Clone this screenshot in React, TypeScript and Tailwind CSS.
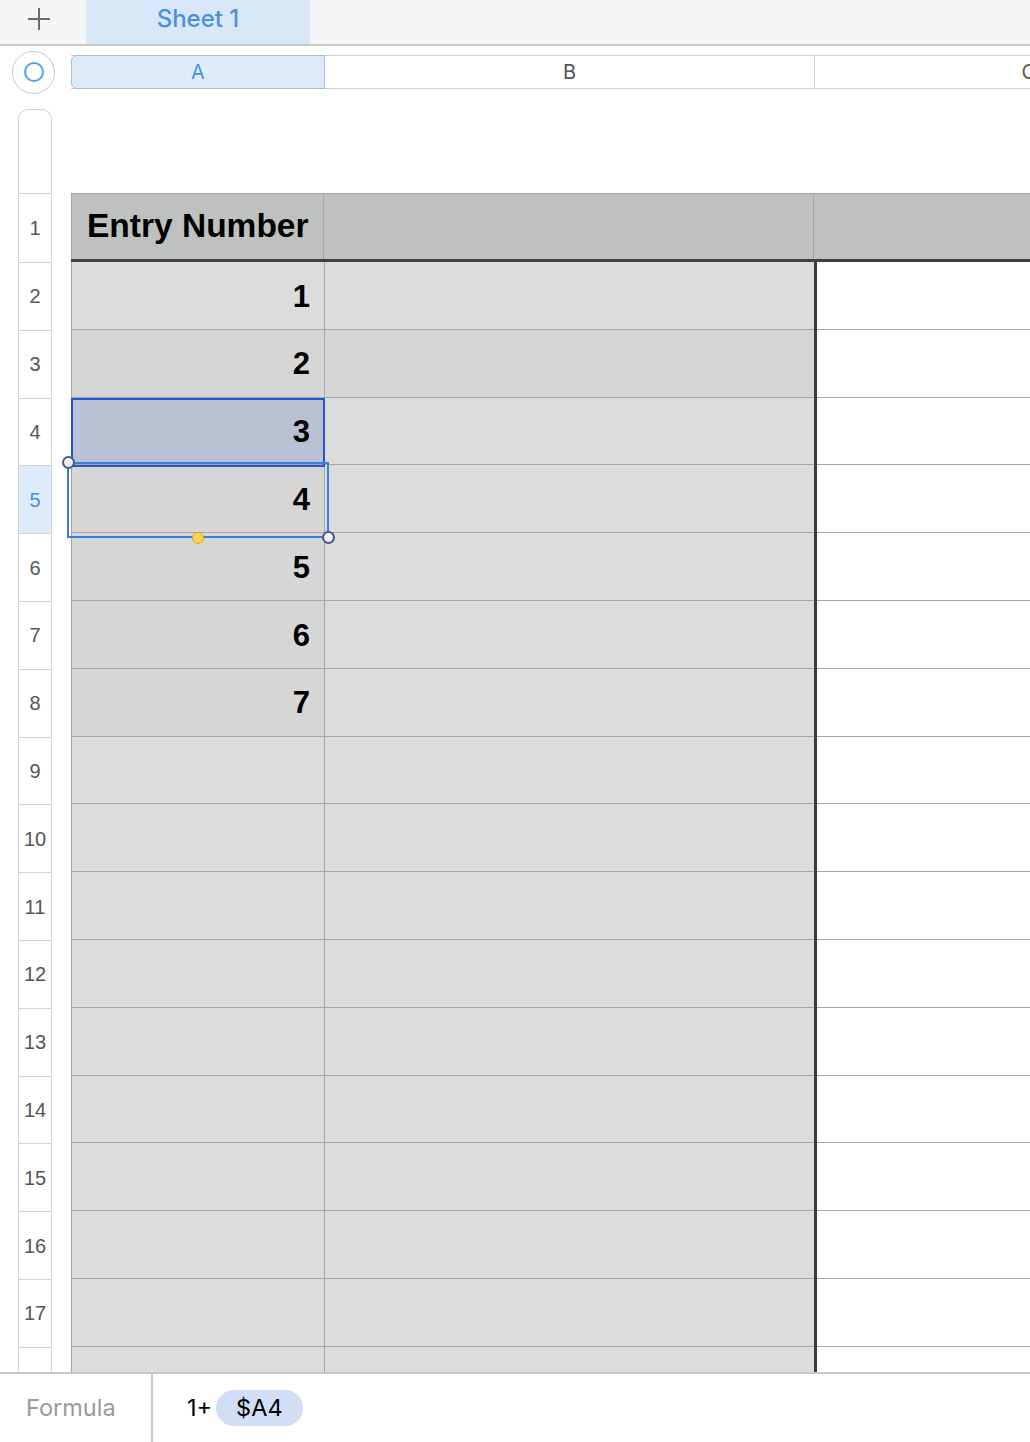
import React from "react";

const ROWS = Array.from({ length: 18 }, (_, i) => i + 1);

const aFill = (n: number) => {
  if (n === 4) return "bg-[#b9c1d4]";
  if (n >= 3 && n <= 8) return "bg-[#d6d6d6]";
  return "bg-[#dcdcdc]";
};

const bFill = (n: number) => (n === 3 ? "bg-[#d6d6d6]" : "bg-[#dcdcdc]");

const Handle = ({ top, left }: { top: number; left: number }) => (
  <div
    className="absolute w-[13px] h-[13px] rounded-full border-2 border-[#45598c] bg-gradient-to-b from-white to-[#e4e4e4]"
    style={{ top: top - 6.5, left: left - 6.5 }}
  />
);

export default function App() {
  return (
    <div className="w-[1030px] h-[1442px] flex flex-col overflow-hidden bg-white font-['Liberation_Sans',Arial,sans-serif]">
      {/* sheet tabs */}
      <div className="h-[46px] shrink-0 flex bg-[#f5f5f5] border-b-2 border-[#c8c8c8]">
        <div className="w-[78px] flex items-center justify-center pb-[6px]">
          <svg width="26" height="26" viewBox="0 0 26 26">
            <path d="M13 2v22M2 13h22" stroke="#6b6b6b" strokeWidth="2" />
          </svg>
        </div>
        <div className="ml-[8px] w-[224px] bg-[#d9e8f8] flex items-center justify-center pb-[6px] text-[24px] font-medium text-[#4a90e2] font-['Inter',sans-serif]">
          Sheet 1
        </div>
      </div>

      {/* column headers */}
      <div className="mt-[9px] h-[34px] shrink-0 flex items-center">
        <div className="ml-[12px] w-[43px] h-[43px] rounded-full border border-[#c4c4c4] flex items-center justify-center shrink-0">
          <div className="w-[20px] h-[20px] rounded-full border-[2.5px] border-[#4da3f5]" />
        </div>
        <div className="ml-[16px] flex flex-1 h-[34px] border-y border-[#cfcfcf] text-[20px] font-['Inter',sans-serif]">
          <div className="w-[254px] -my-px h-[34px] rounded-l-[6px] border border-[#a9bed8] bg-[#deebfa] flex items-center justify-center text-[#4a90e2]">
            A
          </div>
          <div className="w-[490px] border-r border-[#cfcfcf] flex items-center justify-center text-[#555]">
            B
          </div>
          <div className="flex-1 flex items-center justify-end text-[#555] -mr-[6px]">C</div>
        </div>
      </div>

      {/* grid body */}
      <div className="mt-[20px] flex-1 relative overflow-hidden">
        <div className="flex">
          <div className="ml-[18px] w-[34px] shrink-0 h-[84px] rounded-t-[10px] border border-b-0 border-[#d2d2d2]" />
        </div>
        {ROWS.map((n) =>
          n === 1 ? (
            <div key={n} className="flex h-[69px]">
              <div className="ml-[18px] w-[34px] shrink-0 border-x border-t border-[#d2d2d2] flex items-center justify-center text-[20px] text-[#555]">
                1
              </div>
              <div className="ml-[19px] flex flex-1 bg-[#bfc1c0] border-t border-[#a3a3a3] border-b-[3px] border-b-[#404040]">
                <div className="w-[253px] shrink-0 border-l border-r border-[#a6a6a6] flex items-center pl-[15px] text-[33.5px] font-bold text-black">
                  Entry Number
                </div>
                <div className="w-[490px] shrink-0 border-r border-[#a6a6a6]" />
                <div className="flex-1" />
              </div>
            </div>
          ) : (
            <div key={n} className="flex h-[67.8px]">
              <div
                className={`ml-[18px] w-[34px] shrink-0 border-x border-t border-[#d2d2d2] flex items-center justify-center text-[20px] ${
                  n === 5 ? "bg-[#deebfb] text-[#4a90e2] border-[#a9c2e0]" : "text-[#555]"
                }`}
              >
                {n}
              </div>
              <div className="ml-[19px] flex flex-1 border-b border-[#a6a6a6]">
                <div
                  className={`w-[254px] shrink-0 border-l border-r border-[#a6a6a6] flex items-center justify-end pr-[14px] pt-[3px] text-[31px] font-bold text-black ${aFill(n)}`}
                >
                  {n <= 8 ? n - 1 : ""}
                </div>
                <div className={`w-[489px] shrink-0 ${bFill(n)}`} />
                <div className="w-[3px] shrink-0 bg-[#3c3c3c] -mb-px" />
                <div className="flex-1 bg-white" />
              </div>
            </div>
          )
        )}

        {/* active cell A4 */}
        <div className="absolute top-[289px] left-[71px] w-[254px] h-[69px] border-2 border-[#2356d4]" />
        {/* referenced range */}
        <div className="absolute top-[353px] left-[67px] w-[262px] h-[76px] border-2 border-[#3a80d8]" />
        <Handle top={353} left={68} />
        <Handle top={428} left={328} />
        <div className="absolute top-[423px] left-[192px] w-[12px] h-[12px] rounded-full bg-[#f9d44a] border border-[#d9a928]" />
      </div>

      {/* formula bar */}
      <div className="h-[70px] shrink-0 flex border-t-2 border-[#c8c8c8] font-['Inter',sans-serif] text-[23.5px]">
        <div className="w-[153px] border-r-2 border-[#c8c8c8] flex items-center pl-[26px] text-[#9a9a9a]">
          Formula
        </div>
        <div className="flex items-center pl-[34px] gap-[4px] text-black">
          <span>1+</span>
          <span className="h-[36px] px-[20px] rounded-full bg-[#d2def5] flex items-center">$A4</span>
        </div>
      </div>
    </div>
  );
}
